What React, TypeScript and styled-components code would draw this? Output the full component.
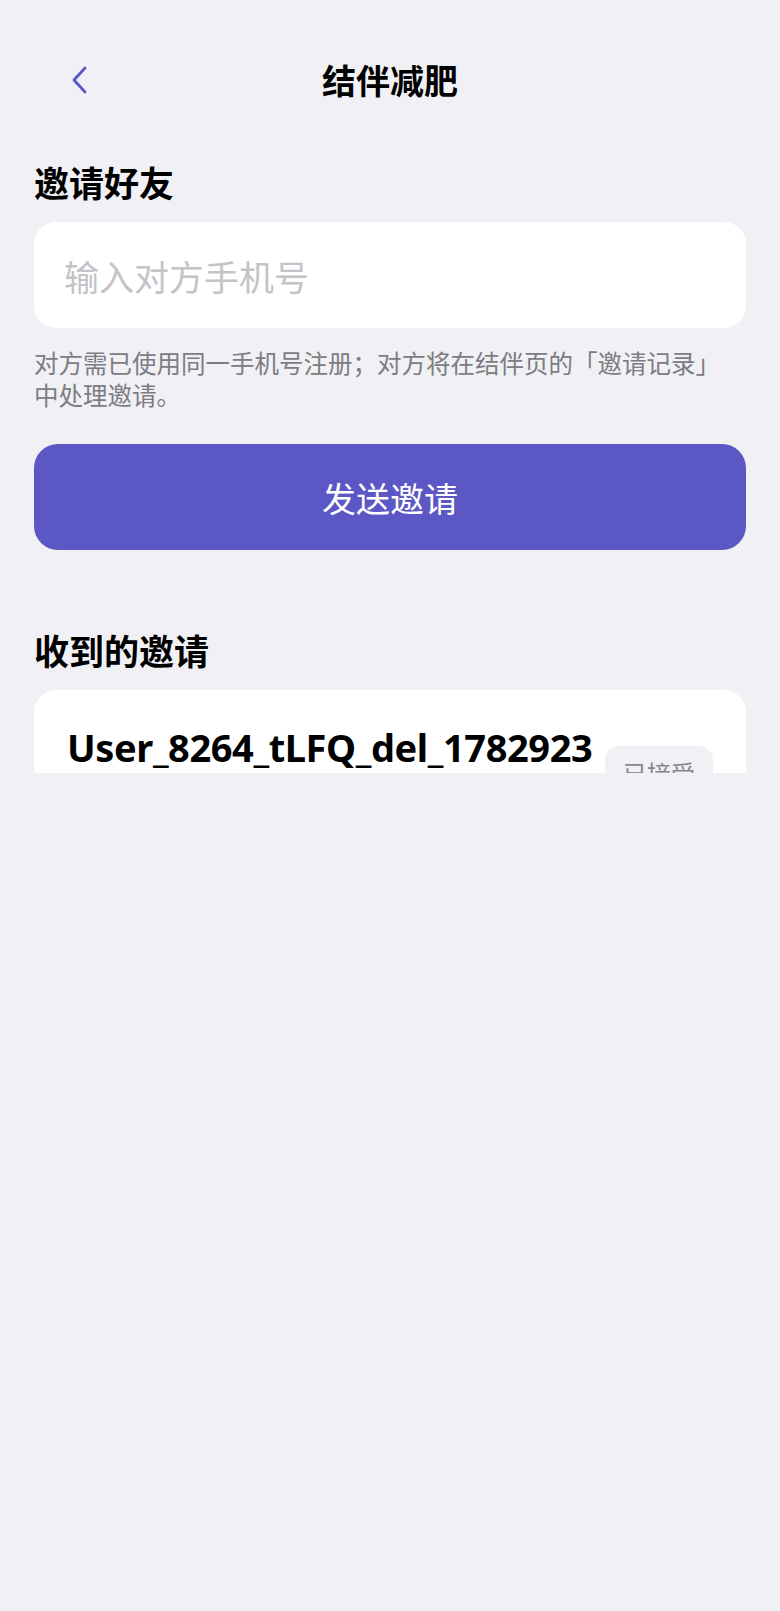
import React, { useState } from 'react';
import styled, { createGlobalStyle } from 'styled-components';

const GlobalStyle = createGlobalStyle`
    html, body {
        margin: 0;
        padding: 0;
        background: #f0f0f5;
    }
    body {
        font-family: "Noto Sans", "Noto Sans CJK SC", sans-serif;
        color: #000000;
    }
    * {
        box-sizing: border-box;
    }
`;

const Page = styled.div`
    min-height: 1611px;
    padding: 0 34px;
    background: #f0f0f5;
    display: flex;
    flex-direction: column;
`;

const Header = styled.div`
    height: 160px;
    display: grid;
    grid-template-columns: 1fr auto 1fr;
    align-items: center;
`;

const BackButton = styled.button`
    justify-self: start;
    margin-left: 37px;
    width: 30px;
    height: 40px;
    padding: 0;
    border: none;
    background: none;
    display: flex;
    align-items: center;
    cursor: pointer;
`;

const HeaderTitle = styled.div`
    font-family: "Noto Sans CJK SC", sans-serif;
    font-size: 34px;
    font-weight: 700;
    line-height: 44px;
`;

const SectionTitle = styled.div<{ $spaceTop?: number }>`
    font-family: "Noto Sans CJK SC", sans-serif;
    font-size: 35px;
    font-weight: 700;
    line-height: 44px;
    margin-top: ${(p) => p.$spaceTop ?? 0}px;
`;

const PhoneInput = styled.input`
    margin-top: 18px;
    height: 106px;
    width: 100%;
    border: none;
    outline: none;
    border-radius: 22px;
    background: #ffffff;
    padding: 0 30px;
    font-family: "Noto Sans CJK SC", sans-serif;
    font-size: 35px;
    color: #222222;
    &::placeholder {
        color: #c3c3c8;
    }
`;

const Hint = styled.p`
    margin: 19px 0 0 0;
    padding-right: 12px;
    font-family: "Noto Sans CJK SC", sans-serif;
    font-size: 24.5px;
    line-height: 32px;
    color: #7c7c82;
`;

const SendButton = styled.button`
    margin-top: 33px;
    height: 106px;
    width: 100%;
    border: none;
    outline: none;
    border-radius: 24px;
    background: #5b57c4;
    color: #ffffff;
    font-family: "Noto Sans CJK SC", sans-serif;
    font-size: 34px;
    cursor: pointer;
`;

const ListViewport = styled.div`
    margin-top: 18px;
    height: 83px;
    overflow: hidden;
`;

const InviteCard = styled.div`
    background: #ffffff;
    border-radius: 22px;
    padding: 35px 33px 30px 33px;
    display: flex;
    align-items: flex-start;
    gap: 10px;
`;

const InviteName = styled.div`
    flex: 1;
    min-width: 0;
    font-family: "Noto Sans", "Noto Sans CJK SC", sans-serif;
    font-size: 38px;
    font-weight: 700;
    line-height: 44px;
    white-space: nowrap;
    letter-spacing: -0.4px;
`;

const StatusBadge = styled.div<{ $tone: 'done' | 'pending' }>`
    flex-shrink: 0;
    margin-top: 21px;
    height: 52px;
    padding: 0 18px;
    border-radius: 14px;
    display: flex;
    align-items: center;
    font-family: "Noto Sans CJK SC", sans-serif;
    font-size: 24px;
    background: ${(p) => (p.$tone === 'done' ? '#f1f1f5' : '#ecebfa')};
    color: ${(p) => (p.$tone === 'done' ? '#85858b' : '#5b57c4')};
`;

const invites = [
    { name: 'User_8264_tLFQ_del_1782923', status: '已接受', tone: 'done' as const },
];

function App() {
    const [phone, setPhone] = useState('');

    return (
        <>
            <GlobalStyle />
            <Page>
                <Header>
                    <BackButton aria-label="返回">
                        <svg width="18" height="28" viewBox="0 0 18 28" fill="none">
                            <path
                                d="M14 2 L3 14 L14 26"
                                stroke="#5b57c4"
                                strokeWidth="2.8"
                                strokeLinecap="round"
                                strokeLinejoin="round"
                            />
                        </svg>
                    </BackButton>
                    <HeaderTitle>结伴减肥</HeaderTitle>
                    <div />
                </Header>

                <SectionTitle>邀请好友</SectionTitle>
                <PhoneInput
                    placeholder="输入对方手机号"
                    value={phone}
                    onChange={(e) => setPhone(e.target.value)}
                />
                <Hint>
                    对方需已使用同一手机号注册；对方将在结伴页的「邀请记录」中处理邀请。
                </Hint>
                <SendButton>发送邀请</SendButton>

                <SectionTitle $spaceTop={78}>收到的邀请</SectionTitle>
                <ListViewport>
                    {invites.map((item) => (
                        <InviteCard key={item.name}>
                            <InviteName>{item.name}</InviteName>
                            <StatusBadge $tone={item.tone}>{item.status}</StatusBadge>
                        </InviteCard>
                    ))}
                </ListViewport>
            </Page>
        </>
    );
}

export default App;
